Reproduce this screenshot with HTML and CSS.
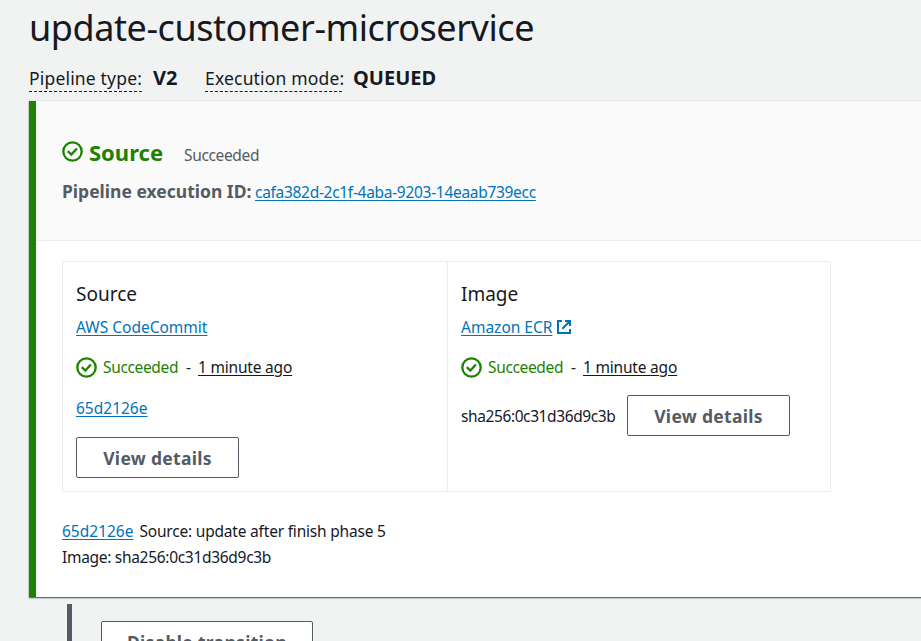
FILE: index.html
```html
<!DOCTYPE html>
<html lang="en">
<head>
<meta charset="utf-8">
<title>update-customer-microservice</title>
<link rel="stylesheet" href="styles.css">
</head>
<body>
<svg class="defs" width="0" height="0">
  <symbol id="check" viewBox="0 0 21 21"><circle cx="10.5" cy="10.5" r="9.2"/><path d="M5.8 10.2l3.5 3.3 5.6-6"/></symbol>
  <symbol id="external" viewBox="0 0 14 14"><path d="M5 1H1v12h12V9M8 1h5v5M13 1L5.3 8.7"/></symbol>
</svg>
<main class="page">
  <h1 class="title">update-customer-microservice</h1>
  <div class="meta">
    <span class="meta-label type">Pipeline type:</span><span class="meta-value v2">V2</span>
    <span class="meta-label mode">Execution mode:</span><span class="meta-value queued">QUEUED</span>
  </div>
  <section class="stage">
    <header class="stage-head">
      <div class="stage-title"><svg class="check"><use href="#check"/></svg><h2>Source</h2><span class="stage-status">Succeeded</span></div>
      <div class="execution"><b>Pipeline execution ID:</b><a class="link exec-id">cafa382d-2c1f-4aba-9203-14eaab739ecc</a></div>
    </header>
    <div class="stage-body">
      <div class="actions">
        <article class="action">
          <h3>Source</h3>
          <div class="provider"><a class="link codecommit">AWS CodeCommit</a></div>
          <div class="status"><svg class="check"><use href="#check"/></svg><span class="ok">Succeeded</span><span class="dash">-</span><span class="time">1 minute ago</span></div>
          <div class="revision"><a class="link hash">65d2126e</a></div>
          <button class="button">View details</button>
        </article>
        <article class="action">
          <h3 class="image">Image</h3>
          <div class="provider"><a class="link ecr">Amazon ECR</a><svg class="external"><use href="#external"/></svg></div>
          <div class="status"><svg class="check"><use href="#check"/></svg><span class="ok">Succeeded</span><span class="dash">-</span><span class="time">1 minute ago</span></div>
          <div class="digest"><span class="sha">sha256:0c31d36d9c3b</span><button class="button">View details</button></div>
        </article>
      </div>
      <div class="summary">
        <div><a class="link hash">65d2126e</a><span class="message">Source: update after finish phase 5</span></div>
        <div><span class="image-sha">Image: sha256:0c31d36d9c3b</span></div>
      </div>
    </div>
  </section>
  <div class="transition"><div class="connector"></div><button class="button disable">Disable transition</button></div>
</main>
</body>
</html>
```

FILE: styles.css
```css
* { box-sizing: border-box; }
body {
  margin: 0;
  height: 641px;
  overflow: hidden;
  background: #f1f3f3;
  color: #16191f;
  font: 15.5px/26px "Noto Sans", sans-serif;
  white-space: nowrap;
}
h1, h2, h3 { margin: 0; }
.defs { display: none; }
.page { padding: 6px 0 0 29px; }
.title { font-size: 36px; line-height: 44px; font-weight: 400; letter-spacing: -.44px; }
.meta { display: flex; align-items: baseline; height: 51px; padding-top: 16px; }
.meta-label { font-size: 17.5px; line-height: 24px; height: 26px; letter-spacing: .18px; border-bottom: 1px dashed #16191f; }
.type { width: 113px; }
.mode { width: 137px; margin-left: 26px; }
.meta-value { margin-left: 11px; font-size: 20px; line-height: 24px; font-weight: 700; }
.v2 { width: 26px; }
.stage {
  height: 496px;
  width: 920px;
  border-left: 7px solid #1d8102;
  background: #fff;
  box-shadow: 0 1px 1px rgba(0, 28, 36, .5), 0 1px 2px rgba(0, 28, 36, .3), 0 -1px 0 #e8ebeb;
}
.stage-head { height: 140px; padding: 37px 0 0 26px; background: #fafafa; border-bottom: 1px solid #eaeded; }
.stage-title { display: flex; align-items: baseline; height: 40px; color: #1d8102; }
.check { width: 21px; height: 21px; flex: none; fill: none; stroke: #1d8102; stroke-width: 2.3; }
.stage-title .check { align-self: flex-start; margin-top: 3px; }
h2 { margin-left: 6px; width: 95px; font-size: 22px; line-height: 28px; font-weight: 700; }
.stage-status { color: #545b64; letter-spacing: -.35px; }
.execution { display: flex; align-items: baseline; color: #545b64; }
.execution b { width: 193px; font-size: 17.5px; }
.link { color: #0073bb; text-decoration: underline; text-decoration-thickness: 1px; text-underline-offset: 2px; }
.exec-id { letter-spacing: -.3px; }
.stage-body { padding: 20px 0 0 26px; }
.actions { display: grid; grid-template-columns: 384px 383px; width: 769px; height: 231px; border: 1px solid #eaeded; }
.action { padding: 19px 13px 0; }
.action + .action { border-left: 1px solid #eaeded; }
h3 { font-size: 19px; line-height: 27px; font-weight: 400; }
.provider { height: 38px; padding-top: 6px; display: flex; }
.external { width: 14px; height: 14px; margin: 6px 0 0 5px; fill: none; stroke: #0073bb; stroke-width: 2; }
.status { display: flex; align-items: center; height: 42px; }
.ok { margin-left: 6px; width: 83px; color: #1d8102; letter-spacing: -.35px; }
.dash { width: 12px; }
.time { letter-spacing: -.2px; text-decoration: underline; text-underline-offset: 2px; }
.revision { height: 49px; padding-top: 7px; }
.button { display: block; width: 163px; height: 41px; padding: 0; border: 1px solid #545b64; border-radius: 2px; background: #fff; color: #545b64; font: 700 17.5px/24px "Noto Sans", sans-serif; letter-spacing: .3px; }
.digest { display: flex; align-items: center; height: 41px; margin-top: 7px; }
.sha { width: 166px; letter-spacing: -.4px; }
.summary { padding-top: 26px; }
.message { margin-left: 6px; letter-spacing: -.2px; }
.image-sha { letter-spacing: -.3px; }
.transition { display: flex; padding: 7px 0 0 38px; }
.connector { width: 5px; height: 37px; background: #545b64; }
.disable { width: 212px; margin: 17px 0 0 29px; flex: none; }
```
